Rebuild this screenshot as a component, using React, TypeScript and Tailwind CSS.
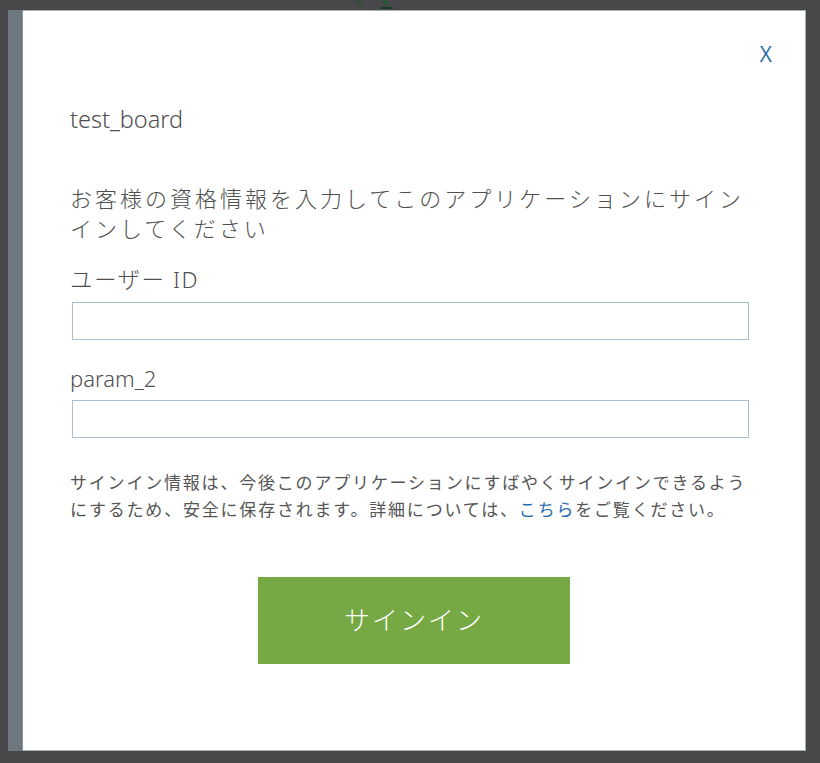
import React from 'react';

const jp = '"Noto Sans", "Noto Sans CJK JP", sans-serif';

export default function App() {
    return (
        <div className="h-[763px] w-[820px] bg-[#48484a] overflow-hidden" style={{ fontFamily: jp }}>
            {/* background peeking above the dialog */}
            <div className="h-[10px] pl-[345px]">
                <svg width="60" height="10" viewBox="0 0 60 10">
                    <path d="M10 0 L18 6" stroke="#2f4a35" strokeWidth="3" opacity="0.6" />
                    <path d="M38 0 L44 5" stroke="#1f5a32" strokeWidth="3" />
                    <path d="M36 8 L48 8" stroke="#1b3d27" strokeWidth="2" />
                </svg>
            </div>

            {/* Dialog frame */}
            <div className="ml-[8px] flex h-[741px] w-[798px]">
                <div className="w-[15px] bg-[#6e7880] border-r border-[#8a949c]" />
                <div className="flex-1 bg-white border-t border-r border-b border-[#a6aeb6] pl-[47px] pr-[56px]">
                    {/* Close */}
                    <div className="mt-[33px] flex h-[20px] justify-end">
                        <span className="mr-[-23px] text-[21px] leading-[20px] text-[#2a6da6]" style={{ fontFamily: '"Open Sans", sans-serif' }}>X</span>
                    </div>

                    {/* Title */}
                    <div className="mt-[40px] text-[23.5px] font-light leading-[30px] text-[#4f4f4f]">test_board</div>

                    {/* Heading */}
                    <div className="mt-[49px] text-[22px] font-light leading-[30px] tracking-[3px] text-[#4f4f4f]">
                        お客様の資格情報を入力してこのアプリケーションにサインインしてください
                    </div>

                    {/* User ID */}
                    <div className="mt-[22px] text-[22.5px] font-light leading-[30px] tracking-[1.5px] text-[#4f4f4f]">ユーザー ID</div>
                    <input
                        type="text"
                        className="mt-[7px] ml-[2px] block h-[38px] w-[677px] border border-[#a9bed3] bg-white outline-none"
                    />

                    {/* param_2 */}
                    <div className="mt-[23px] text-[22px] font-light leading-[30px] text-[#4f4f4f]">param_2</div>
                    <input
                        type="text"
                        className="mt-[7px] ml-[2px] block h-[38px] w-[677px] border border-[#a9bed3] bg-white outline-none"
                    />

                    {/* Info */}
                    <p className="mt-[31px] text-[17px] leading-[27px] tracking-[1.8px] text-[#555555]">
                        サインイン情報は、今後このアプリケーションにすばやくサインインできるようにするため、安全に保存されます。詳細については、<span className="text-[#1f6db0]">こちら</span>をご覧ください。
                    </p>

                    {/* Sign in */}
                    <button
                        type="button"
                        className="mt-[54px] ml-[188px] flex h-[87px] w-[312px] items-center justify-center bg-[#76a843] text-[26px] font-light tracking-[2px] text-white"
                    >
                        サインイン
                    </button>
                </div>
            </div>
        </div>
    );
}
